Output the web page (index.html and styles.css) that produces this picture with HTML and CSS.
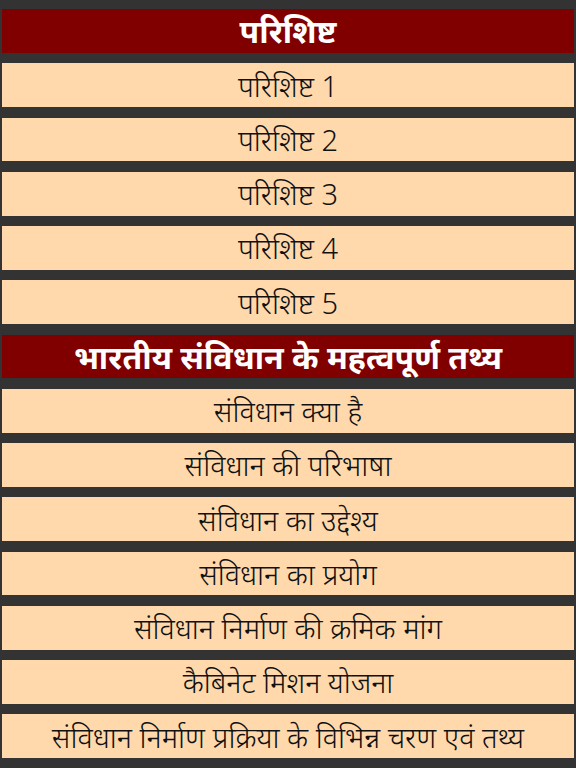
FILE: index.html
```html
<!DOCTYPE html>
<html lang="hi">
<head>
<meta charset="utf-8">
<link rel="stylesheet" href="styles.css">
</head>
<body>
<div class="list">
  <div class="row head">परिशिष्ट</div>
  <div class="row item">परिशिष्ट 1</div>
  <div class="row item">परिशिष्ट 2</div>
  <div class="row item">परिशिष्ट 3</div>
  <div class="row item">परिशिष्ट 4</div>
  <div class="row item">परिशिष्ट 5</div>
  <div class="row head">भारतीय संविधान के महत्वपूर्ण तथ्य</div>
  <div class="row item">संविधान क्या है</div>
  <div class="row item">संविधान की परिभाषा</div>
  <div class="row item">संविधान का उद्देश्य</div>
  <div class="row item">संविधान का प्रयोग</div>
  <div class="row item">संविधान निर्माण की क्रमिक मांग</div>
  <div class="row item">कैबिनेट मिशन योजना</div>
  <div class="row item">संविधान निर्माण प्रक्रिया के विभिन्न चरण एवं तथ्य</div>
  <div class="row item"></div>
</div>
</body>
</html>
```
FILE: styles.css
```css
html, body {
  margin: 0;
  padding: 0;
  background: #333333;
  height: 768px;
  overflow: hidden;
}
.list {
  display: flex;
  flex-direction: column;
  gap: 10.5px;
  padding: 9px 2px 0 2px;
}
.row {
  height: 43.75px;
  flex: none;
  display: flex;
  align-items: center;
  justify-content: center;
  font-family: "Noto Sans", "Lato", sans-serif;
  white-space: nowrap;
  overflow: hidden;
}
.head {
  background: #800000;
  color: #ffffff;
  font-size: 32px;
  font-weight: bold;
}
.item {
  background: #ffd9ac;
  color: #111111;
  font-size: 29px;
  font-weight: 300;
}
```
